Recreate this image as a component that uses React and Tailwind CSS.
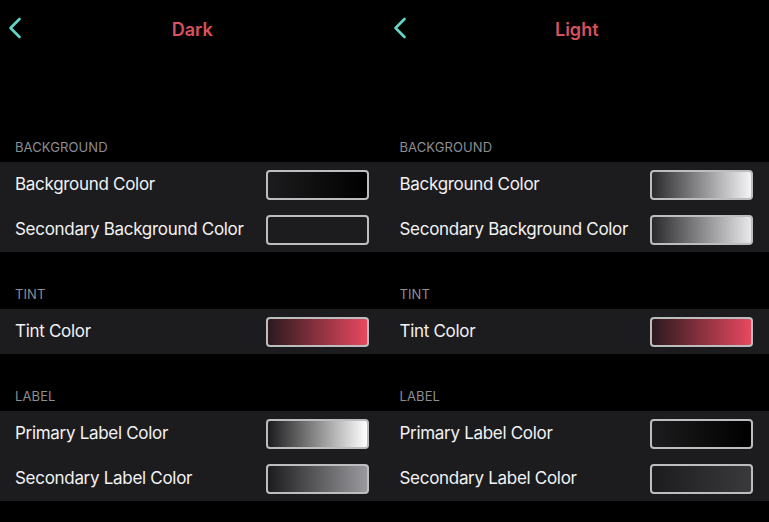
import React from "react";

const panels = [
  {
    title: "Dark",
    sections: [
      {
        name: "BACKGROUND",
        rows: [
          { label: "Background Color", from: "#1c1c1e", to: "#000000" },
          { label: "Secondary Background Color", from: "#1c1c1e", to: "#1c1c1e" },
        ],
      },
      { name: "TINT", rows: [{ label: "Tint Color", from: "#2a1a1e", to: "#e8485f" }] },
      {
        name: "LABEL",
        rows: [
          { label: "Primary Label Color", from: "#1c1c1e", to: "#ffffff" },
          { label: "Secondary Label Color", from: "#1c1c1e", to: "#9a9a9e" },
        ],
      },
    ],
  },
  {
    title: "Light",
    sections: [
      {
        name: "BACKGROUND",
        rows: [
          { label: "Background Color", from: "#2a2a2c", to: "#f4f4f6" },
          { label: "Secondary Background Color", from: "#2a2a2c", to: "#e8e8ea" },
        ],
      },
      { name: "TINT", rows: [{ label: "Tint Color", from: "#2a1a1e", to: "#e8485f" }] },
      {
        name: "LABEL",
        rows: [
          { label: "Primary Label Color", from: "#1c1c1e", to: "#000000" },
          { label: "Secondary Label Color", from: "#1c1c1e", to: "#3a3a3c" },
        ],
      },
    ],
  },
];

const BackChevron = () => (
  <svg width="14" height="22" viewBox="0 0 14 22" fill="none">
    <polyline
      points="11.5,2 2.5,11 11.5,20"
      stroke="#5fd6c6"
      strokeWidth="2.6"
      strokeLinecap="round"
      strokeLinejoin="round"
    />
  </svg>
);

const Swatch = ({ from, to }) => (
  // gradient stops come from data, so inline style
  <div
    className="w-[103px] h-[30px] rounded-[4px] border-2 border-[#bdbdc0]"
    style={{ backgroundImage: `linear-gradient(to right, ${from}, ${to})` }}
  />
);

const Panel = ({ panel }) => (
  <div className="flex flex-col">
    {/* Nav bar */}
    <div className="relative h-[58px] flex items-center justify-center">
      <div className="absolute left-[8px] top-[17px]">
        <BackChevron />
      </div>
      <p className="text-[18px] font-semibold text-[#d9515e]">{panel.title}</p>
    </div>

    {panel.sections.map((section, i) => (
      <div key={section.name}>
        <div className={`flex items-end px-[15px] pb-[7px] ${i === 0 ? "h-[104px]" : "h-[57px]"}`}>
          <p className="text-[13px] leading-[16px] text-[#8d8d92] tracking-[0.1px]">{section.name}</p>
        </div>
        <div className="bg-[#1c1c1e]">
          {section.rows.map((row) => (
            <div key={row.label} className="h-[45px] flex items-center justify-between pl-[15px] pr-[16px]">
              <p className="text-[17px] text-[#f2f2f4] tracking-[-0.3px]">{row.label}</p>
              <Swatch from={row.from} to={row.to} />
            </div>
          ))}
        </div>
      </div>
    ))}
  </div>
);

const App = () => {
  return (
    <div className="w-[769px] h-[522px] bg-black overflow-hidden grid grid-cols-2 font-['Inter',sans-serif]">
      {panels.map((p) => (
        <Panel key={p.title} panel={p} />
      ))}
    </div>
  );
};

export default App;
